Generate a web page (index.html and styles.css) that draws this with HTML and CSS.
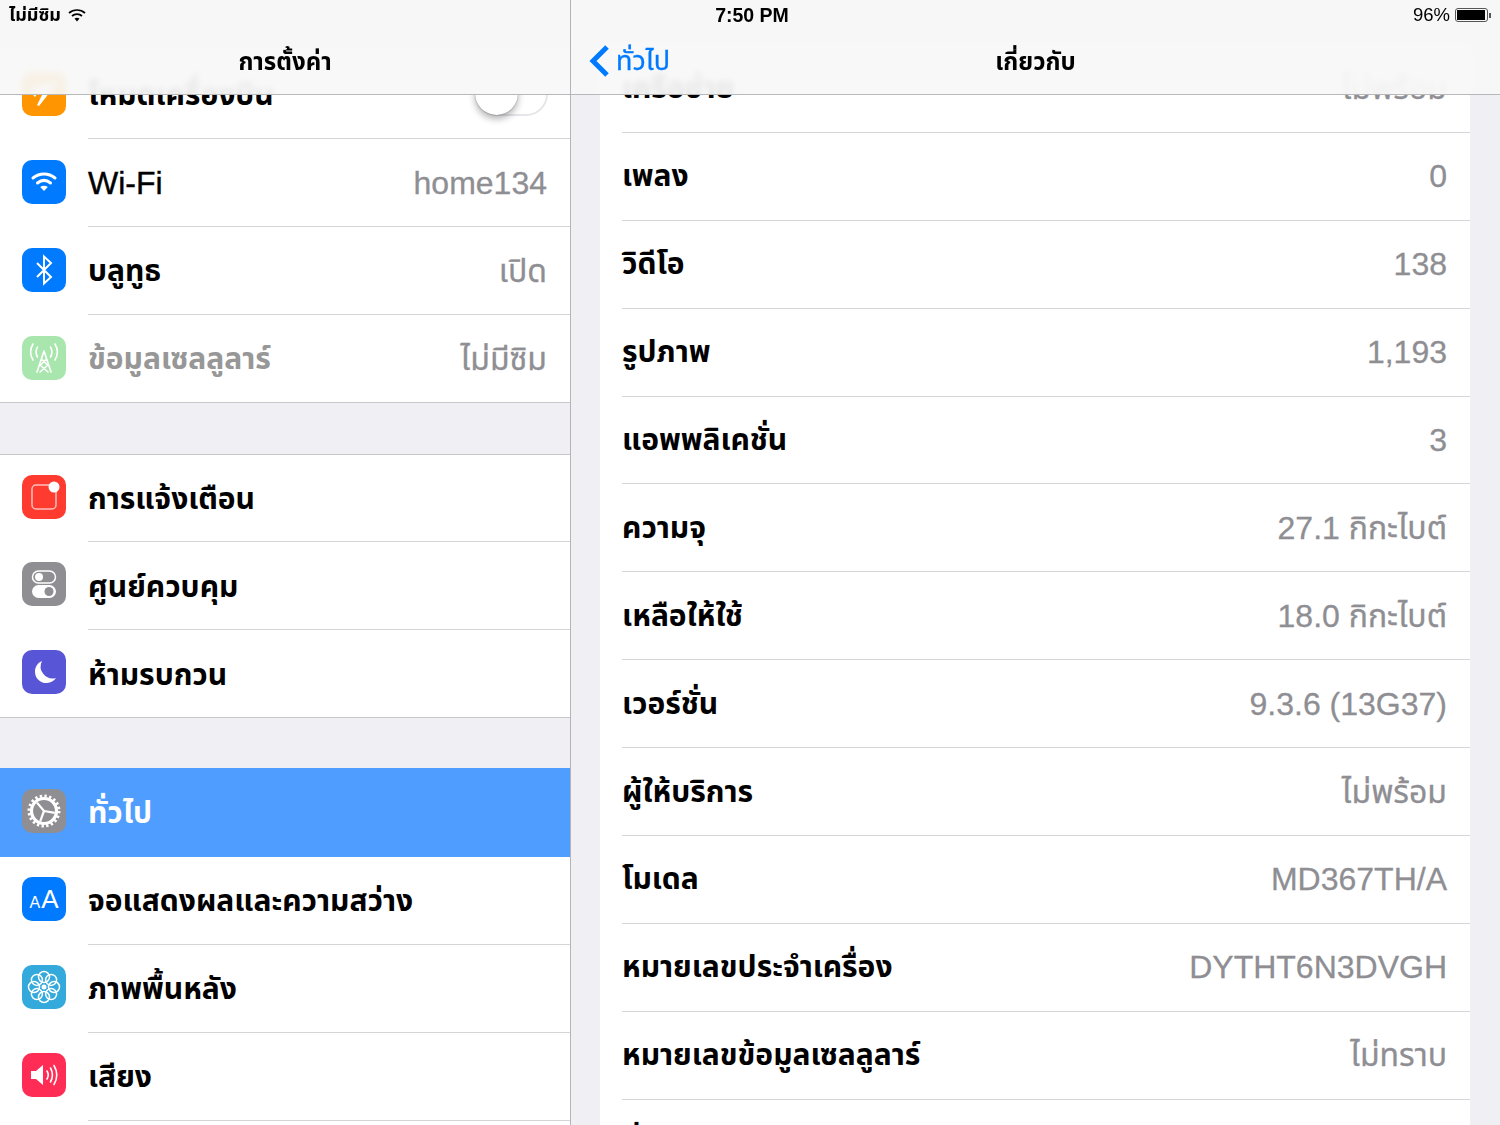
FILE: index.html
```html
<!DOCTYPE html>
<html lang="th">
<head>
    <meta charset="UTF-8">
    <meta name="viewport" content="width=device-width, initial-scale=1.0">
    <title>การตั้งค่า</title>
    <link rel="stylesheet" href="styles.css">
</head>
<body>
<div class="app">
    <div class="master">
        <div class="nav">
            <div class="nav-title">การตั้งค่า</div>
        </div>
        <div class="group first-group">
            <div class="row">
                <svg class="icon orange" viewBox="0 0 44 44"><path d="M35 8L24 13 8 17l2 4h11L15 33l2 1 11-14z" fill="#fff"/><path d="M9 21l4 4 2-3z" fill="#fff"/></svg>
                <div class="row-body"><span class="label">โหมดเครื่องบิน</span><span class="toggle"><span class="thumb"></span></span></div>
            </div>
            <div class="row">
                <svg class="icon blue" viewBox="0 0 44 44"><g fill="none" stroke="#fff" stroke-width="3" stroke-linecap="round"><path d="M11 18c6.500-5.500 15.500-5.500 22 0"/><path d="M15.500 23c4-3.200 9-3.200 13 0"/></g><path d="M22 31l-3.800-4c2.200-1.600 5.400-1.600 7.600 0z" fill="#fff"/></svg>
                <div class="row-body"><span class="label latin">Wi-Fi</span><span class="value">home134</span></div>
            </div>
            <div class="row">
                <svg class="icon blue" viewBox="0 0 44 44"><path d="M15 15l14 14-7 6.500V8.500l7 6.500-14 14" fill="none" stroke="#fff" stroke-width="2"/></svg>
                <div class="row-body"><span class="label">บลูทูธ</span><span class="value">เปิด</span></div>
            </div>
            <div class="row last">
                <svg class="icon green" viewBox="0 0 44 44"><g fill="none" stroke="#fff" stroke-width="1.600" stroke-linecap="round"><path d="M11 8c-3 5-3 11 0 16M33 8c3 5 3 11 0 16M15.500 11c-1.800 3.500-1.800 7 0 10M28.500 11c1.800 3.500 1.800 7 0 10"/><path d="M22 15l-7 21M22 15l7 21M19.500 23l6 6M24.500 23l-6 6M18 29l8 7M26 29l-8 7"/></g></svg>
                <div class="row-body"><span class="label dim">ข้อมูลเซลลูลาร์</span><span class="value">ไม่มีซิม</span></div>
            </div>
        </div>
        <div class="group mid-group">
            <div class="row head">
                <svg class="icon red" viewBox="0 0 44 44"><path d="M29 10H14a4 4 0 0 0-4 4v16a4 4 0 0 0 4 4h16a4 4 0 0 0 4-4V16" fill="none" stroke="#ffc0bb" stroke-width="1.500"/><circle cx="32" cy="12" r="5.500" fill="#fff"/></svg>
                <div class="row-body"><span class="label">การแจ้งเตือน</span></div>
            </div>
            <div class="row">
                <svg class="icon grey" viewBox="0 0 44 44"><rect x="10.500" y="9" width="23" height="12" rx="6" fill="none" stroke="#fff" stroke-width="1.500"/><circle cx="17" cy="15" r="4" fill="#fff"/><rect x="10" y="23" width="24" height="13" rx="6.500" fill="#fff"/><circle cx="27" cy="29.500" r="4.500" fill="#8e8e93"/></svg>
                <div class="row-body"><span class="label">ศูนย์ควบคุม</span></div>
            </div>
            <div class="row last">
                <svg class="icon indigo" viewBox="0 0 44 44"><path d="M20 11a11.500 11.500 0 1 0 14 17 12 12 0 0 1-14-17z" fill="#fff"/></svg>
                <div class="row-body"><span class="label">ห้ามรบกวน</span></div>
            </div>
        </div>
        <div class="group open-group">
            <div class="row selected">
                <svg class="icon grey" viewBox="0 0 44 44"><g fill="none" stroke="#fff"><circle cx="22" cy="22" r="15" stroke-width="3" stroke-dasharray="2.360 2.350"/><circle cx="22" cy="22" r="12.500" stroke-width="3.200"/><path d="M22 22l-7-8.400M22 22l10.800 1.900M22 22l-3.800 10.300" stroke-width="2.200"/></g></svg>
                <div class="row-body"><span class="label">ทั่วไป</span></div>
            </div>
            <div class="row">
                <div class="icon blue icon-text"><span class="small-a">A</span><span class="big-a">A</span></div>
                <div class="row-body"><span class="label">จอแสดงผลและความสว่าง</span></div>
            </div>
            <div class="row">
                <svg class="icon teal" viewBox="0 0 44 44"><g fill="none" stroke="#fff" stroke-width="1.500"><circle cx="22" cy="12" r="5.500"/><circle cx="29.100" cy="14.900" r="5.500"/><circle cx="32" cy="22" r="5.500"/><circle cx="29.100" cy="29.100" r="5.500"/><circle cx="22" cy="32" r="5.500"/><circle cx="14.900" cy="29.100" r="5.500"/><circle cx="12" cy="22" r="5.500"/><circle cx="14.900" cy="14.900" r="5.500"/></g><circle cx="22" cy="22" r="2.500" fill="#fff"/></svg>
                <div class="row-body"><span class="label">ภาพพื้นหลัง</span></div>
            </div>
            <div class="row">
                <svg class="icon pink" viewBox="0 0 44 44"><path d="M9 18h5l7-6v20l-7-6H9z" fill="#fff"/><g fill="none" stroke="#fff" stroke-width="1.600" stroke-linecap="round"><path d="M25 18c1.500 2.500 1.500 5.500 0 8M28.500 15c2.500 4.500 2.500 9.500 0 14M32 12.500c3.500 6 3.500 13 0 19"/></g></svg>
                <div class="row-body"><span class="label">เสียง</span></div>
            </div>
            <div class="row"></div>
        </div>
    </div>

    <div class="detail">
        <div class="nav">
            <div class="back">
                <svg class="chevron" viewBox="0 0 22 34"><path d="M19 3L5 17l14 14" fill="none" stroke="#007aff" stroke-width="5"/></svg>
                <span>ทั่วไป</span>
            </div>
            <div class="nav-title">เกี่ยวกับ</div>
        </div>
        <div class="card">
            <div class="info-row"><span class="label">เครือข่าย</span><span class="value">ไม่พร้อม</span></div>
            <div class="info-row"><span class="label">เพลง</span><span class="value">0</span></div>
            <div class="info-row"><span class="label">วิดีโอ</span><span class="value">138</span></div>
            <div class="info-row"><span class="label">รูปภาพ</span><span class="value">1,193</span></div>
            <div class="info-row"><span class="label">แอพพลิเคชั่น</span><span class="value">3</span></div>
            <div class="info-row"><span class="label">ความจุ</span><span class="value">27.1 กิกะไบต์</span></div>
            <div class="info-row"><span class="label">เหลือให้ใช้</span><span class="value">18.0 กิกะไบต์</span></div>
            <div class="info-row"><span class="label">เวอร์ชั่น</span><span class="value">9.3.6 (13G37)</span></div>
            <div class="info-row"><span class="label">ผู้ให้บริการ</span><span class="value">ไม่พร้อม</span></div>
            <div class="info-row"><span class="label">โมเดล</span><span class="value">MD367TH/A</span></div>
            <div class="info-row"><span class="label">หมายเลขประจำเครื่อง</span><span class="value">DYTHT6N3DVGH</span></div>
            <div class="info-row"><span class="label">หมายเลขข้อมูลเซลลูลาร์</span><span class="value">ไม่ทราบ</span></div>
            <div class="info-row"><span class="label">ที่อยู่ Wi-Fi</span></div>
        </div>
    </div>

    <div class="status-bar">
        <div class="status-left">
            <span>ไม่มีซิม</span>
            <svg class="status-wifi" viewBox="0 0 18 14"><g fill="none" stroke="#000" stroke-width="1.700"><path d="M1 5c4.500-4 11.500-4 16 0"/><path d="M4 8c2.800-2.500 7.200-2.500 10 0"/></g><path d="M9 13.500L6.500 10.500c1.500-1 3.500-1 5 0z"/></svg>
        </div>
        <div class="status-time">7:50 PM</div>
        <div class="status-right">
            <span>96%</span>
            <span class="battery"><span class="battery-level"></span></span>
            <span class="battery-tip"></span>
        </div>
    </div>
</div>
</body>
</html>
```
FILE: styles.css
```css
body {
    margin: 0;
    font-family: "Liberation Sans", "Noto Sans Thai", "Noto Sans", sans-serif;
    color: #000;
}
.app {
    position: relative;
    display: flex;
    width: 1500px;
    height: 1125px;
    overflow: hidden;
    background: #efeff4;
}
.master {
    position: relative;
    width: 571px;
    height: 1125px;
    padding-top: 51px;
    box-sizing: border-box;
    border-right: 1px solid #b4b4b8;
    overflow: hidden;
    flex-shrink: 0;
}
.detail {
    position: relative;
    flex: 1;
    height: 1125px;
    padding: 45px 30px 0 29px;
    overflow: hidden;
}
.nav {
    position: absolute;
    top: 0;
    left: 0;
    right: 0;
    height: 94px;
    border-bottom: 1px solid #b8b8ba;
    background: rgba(247, 247, 248, 0.93);
    backdrop-filter: blur(3px);
    z-index: 2;
}
.nav-title {
    position: absolute;
    left: 0;
    right: 0;
    top: 43px;
    text-align: center;
    font-size: 24px;
    font-weight: 700;
    line-height: 38px;
}
.back {
    position: absolute;
    left: 17px;
    top: 42px;
    display: flex;
    align-items: center;
    gap: 6px;
    color: #007aff;
    font-size: 27px;
    line-height: 38px;
    -webkit-text-stroke: 0.3px #007aff;
    z-index: 1;
}
.chevron {
    width: 22px;
    height: 34px;
}
.group {
    background: #fff;
    border-top: 1px solid #c8c7cc;
    border-bottom: 1px solid #c8c7cc;
    margin-bottom: 50px;
}
.first-group {
    border-top: none;
    margin-bottom: 51px;
}
.open-group {
    border: none;
}
.mid-group .label {
    margin-top: 2px;
}
.row {
    display: flex;
    align-items: center;
    height: 88px;
    padding-left: 22px;
    box-sizing: border-box;
    gap: 22px;
}
.row.head,
.row.last {
    height: 87px;
}
.row-body {
    flex: 1;
    height: 100%;
    display: flex;
    align-items: center;
    justify-content: space-between;
    padding-right: 23px;
    box-sizing: border-box;
    border-bottom: 1px solid #d5d5d8;
}
.row.last .row-body,
.row.selected .row-body {
    border-bottom: none;
}
.row.selected {
    background: #4e9dff;
    color: #fff;
    height: 89px;
}
.icon {
    width: 44px;
    height: 44px;
    margin-bottom: 4px;
    border-radius: 10px;
    flex-shrink: 0;
}
.first-group .icon {
    margin-bottom: 2px;
}
.orange { background: #ff9500; }
.blue { background: #007aff; }
.green { background: #a8e6ae; }
.red { background: #ff3b30; }
.grey { background: #8e8e93; }
.indigo { background: #5856d6; }
.teal { background: #34aadc; }
.pink { background: #ff2d55; }
.icon-text {
    display: flex;
    align-items: baseline;
    justify-content: center;
    color: #fff;
    line-height: 44px;
    gap: 1px;
}
.small-a { font-size: 16px; }
.big-a { font-size: 26px; }
.label {
    font-size: 30px;
    font-weight: 700;
    line-height: 40px;
}
.label.latin {
    font-size: 32px;
    font-weight: 400;
    -webkit-text-stroke: 0.4px #000;
}
.label.dim {
    color: #979797;
}
.value {
    font-size: 32px;
    line-height: 40px;
    color: #8e8e93;
    -webkit-text-stroke: 0.3px #8e8e93;
}
.toggle {
    position: relative;
    width: 73px;
    height: 44px;
    margin: 0 -1px 2px 0;
    border-radius: 22px;
    border: 2px solid #e5e5ea;
    box-sizing: border-box;
}
.thumb {
    position: absolute;
    left: -2px;
    top: -2px;
    width: 43px;
    height: 43px;
    border-radius: 50%;
    background: #fff;
    box-shadow: 0 0 1px rgba(0, 0, 0, 0.5), 0 4px 7px rgba(0, 0, 0, 0.3);
}
.card {
    background: #fff;
}
.info-row {
    display: flex;
    align-items: center;
    justify-content: space-between;
    height: 87.9px;
    margin-left: 22px;
    padding-right: 23px;
    box-sizing: border-box;
    border-bottom: 1px solid #d5d5d8;
}
.status-bar {
    position: absolute;
    top: 0;
    left: 0;
    right: 0;
    height: 30px;
    padding: 0 9px;
    display: flex;
    align-items: center;
    justify-content: space-between;
    font-size: 18.500px;
    z-index: 3;
}
.status-left,
.status-right {
    display: flex;
    align-items: center;
}
.status-left {
    gap: 7px;
    font-weight: 700;
    font-size: 18px;
}
.status-wifi {
    width: 18px;
    height: 14px;
}
.status-time {
    position: absolute;
    left: 4px;
    right: 0;
    text-align: center;
    font-size: 19.500px;
    font-weight: 700;
}
.battery {
    display: block;
    width: 33px;
    height: 14px;
    margin-left: 5px;
    padding: 1px;
    box-sizing: border-box;
    border: 1px solid #555;
    border-radius: 3px;
}
.battery-level {
    display: block;
    width: 96%;
    height: 100%;
    background: #000;
}
.battery-tip {
    width: 2px;
    height: 5px;
    margin-left: 1px;
    background: #555;
}
```
